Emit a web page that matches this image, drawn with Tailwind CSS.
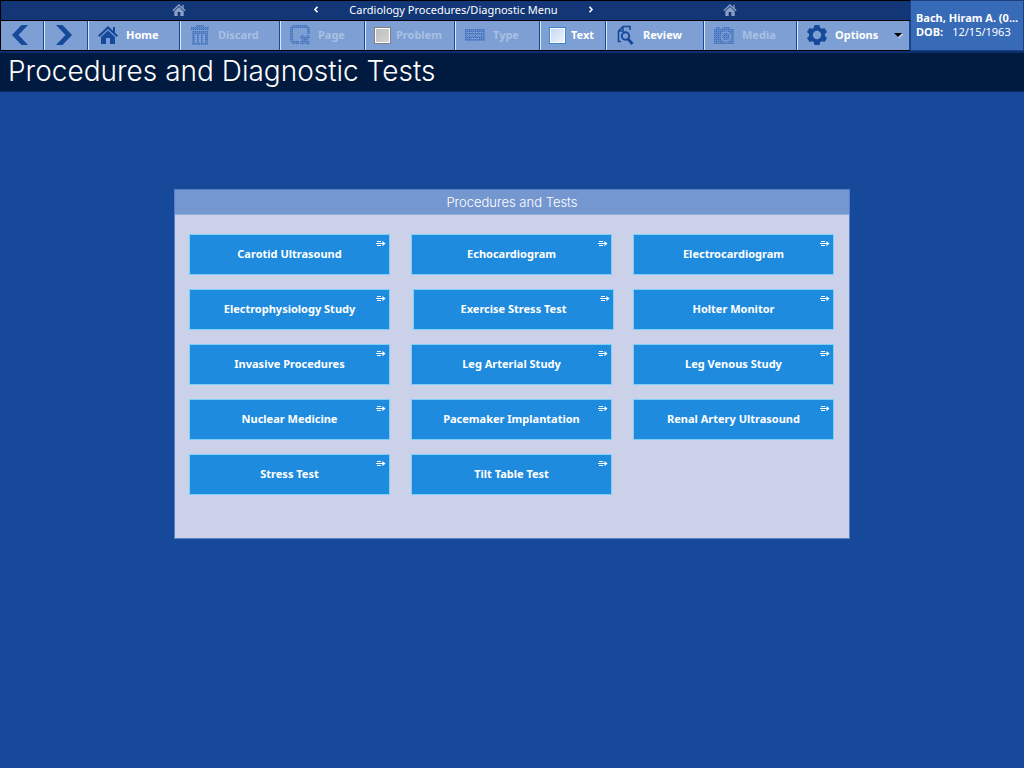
<!DOCTYPE html>
<html lang="en">
<head>
<meta charset="utf-8">
<meta name="viewport" content="width=device-width, initial-scale=1">
<title>Cardiology Procedures/Diagnostic Menu</title>
<script src="https://cdn.jsdelivr.net/npm/@tailwindcss/browser@4"></script>
</head>
<body class="min-h-screen bg-[#17499b] font-['Noto_Sans',sans-serif] text-[11px] leading-[14px] text-white">
<svg class="absolute size-0" aria-hidden="true">
  <defs>
    <pattern id="dither" width="2" height="2" patternUnits="userSpaceOnUse">
      <rect width="2" height="2" fill="#6089ca"/><rect width="1" height="1" fill="#406ebb"/>
    </pattern>
    <symbol id="home" viewBox="0 0 20 18"><path d="M10 0 0 9.500 1.500 11 10 3l8.500 8L20 9.500l-3-3V1h-2v3.700zM10 4.500 3 11v7h5v-6h4v6h5v-7z" fill="currentColor"/></symbol>
    <symbol id="go" viewBox="0 0 10 6"><path d="M1 .5h4M0 2.500h8M1 4.500h4" stroke="#fff" fill="none"/><path d="M6.500 0v5.200L9.500 2.600z" fill="#fff"/></symbol>
  </defs>
</svg>

<header class="flex bg-black">
  <div class="flex min-w-0 flex-1 flex-col gap-px border-y border-l border-black">
    <nav class="grid h-[19px] grid-cols-[300px_1fr_304px] items-center bg-[#123676]" aria-label="Menu path">
      <a href="#" aria-label="Home" class="justify-self-center pb-px pl-14 text-[#8b9fc5]"><svg class="h-3 w-[14px]"><use href="#home"/></svg></a>
      <div class="flex items-center justify-between px-3 pb-[2px]">
        <button type="button" aria-label="Previous menu"><svg class="h-[7px] w-[6px]" viewBox="0 0 6 7"><path d="M4.500.8 2 3.500l2.500 2.700" fill="none" stroke="#fff" stroke-width="1.600"/></svg></button>
        <span>Cardiology Procedures/Diagnostic Menu</span>
        <button type="button" aria-label="Next menu"><svg class="h-[7px] w-[6px]" viewBox="0 0 6 7"><path d="M1.500.8 4 3.500 1.500 6.200" fill="none" stroke="#fff" stroke-width="1.600"/></svg></button>
      </div>
      <a href="#" aria-label="Home" class="justify-self-center pr-14 pb-px text-[#8b9fc5]"><svg class="h-3 w-[14px]"><use href="#home"/></svg></a>
    </nav>
    <div class="flex h-[29px] bg-[#7d9fd3] font-bold" role="toolbar" aria-label="Actions">
      <button type="button" aria-label="Back" class="flex w-[43px] items-center border-r border-[#17499b] pb-px pl-[10px]"><svg class="h-5 w-[18px]" viewBox="0 0 18 20"><path d="M10.500 0H17L7.500 10 17 20h-6.500L1 10z" fill="#17499b"/></svg></button>
      <button type="button" aria-label="Forward" class="flex w-11 items-center border-r border-l border-r-[#17499b] border-l-[#dce6f5] pb-px pl-[10px]"><svg class="h-5 w-[18px]" viewBox="0 0 18 20"><path d="M7.500 0H1l9.500 10L1 20h6.500L17 10z" fill="#17499b"/></svg></button>
      <button type="button" class="flex w-[92px] items-center gap-2 border-r border-l border-r-[#17499b] border-l-[#dce6f5] pb-px pl-[9px]"><svg class="h-[18px] w-5 text-[#17499b]"><use href="#home"/></svg>Home</button>
      <button type="button" disabled class="flex w-[100px] items-center gap-2 border-r border-l border-r-[#17499b] border-l-[#dce6f5] pb-px pl-[10px] text-[#a9c0e4]">
        <svg class="h-5 w-[19px]" viewBox="0 0 19 20" fill="url(#dither)"><path d="M0 2h5V0h8v2h5v3H0z"/><path fill-rule="evenodd" d="M1 6h16v14H1zM4 9v9h2V9zM8 9v9h2V9zM12 9v9h2V9z"/></svg>Discard</button>
      <button type="button" disabled class="flex w-[85px] items-center gap-2 border-r border-l border-r-[#17499b] border-l-[#dce6f5] pb-px pl-[9px] text-[#a9c0e4]">
        <svg class="h-5 w-5" viewBox="0 0 20 20" fill="none" stroke="url(#dither)" stroke-width="3"><path d="M9 17.500H3.500l-2-2v-12l2-2H16l2.500 2V9"/><path d="m11 11 8 8m0-8-8 8" stroke-width="4"/></svg>Page</button>
      <label class="flex w-[90px] items-center gap-[5px] border-r border-l border-r-[#17499b] border-l-[#dce6f5] pb-px pl-[8px] text-[#a9c0e4]">
        <input type="checkbox" disabled class="size-[17px] shrink-0 appearance-none border border-[#808080] bg-linear-to-br from-[#bdbdbd] to-[#d4d4d4] shadow-[inset_0_0_0_1px_#fff]">Problem</label>
      <button type="button" disabled class="flex w-[85px] items-center gap-2 border-r border-l border-r-[#17499b] border-l-[#dce6f5] pb-px pl-[9px] text-[#a9c0e4]">
        <svg class="h-3 w-5" viewBox="0 0 20 12"><path d="M0 0h20v12H0z" fill="url(#dither)"/><path d="M2 3.500h16M2 6.500h16M6 9.500h9" stroke="#82a2d5" stroke-dasharray="2 1"/></svg>Type</button>
      <label class="flex w-[66px] items-center gap-[5px] border-r border-l border-r-[#17499b] border-l-[#dce6f5] pb-px pl-[8px]">
        <input type="checkbox" class="size-[17px] shrink-0 appearance-none border border-[#3d85cf] bg-linear-to-br from-[#c3d7f2] to-[#f0f5fc] shadow-[inset_0_0_0_1px_#fff]">Text</label>
      <button type="button" class="flex w-[98px] items-center gap-2 border-r border-l border-r-[#17499b] border-l-[#dce6f5] pb-px pl-[10px]">
        <svg class="h-5 w-[18px]" viewBox="0 0 18 20" fill="none" stroke="#17499b"><path d="M4 16.500H1.500V6L6 1.500h7V5M6 1.500V6H1.500" stroke-width="1.600"/><circle cx="8.500" cy="11" r="3.700" stroke-width="2"/><path d="m11 14 4.500 5" stroke-width="2.800"/></svg>Review</button>
      <button type="button" disabled class="flex w-[93px] items-center gap-2 border-r border-l border-r-[#17499b] border-l-[#dce6f5] pb-px pl-[9px] text-[#a9c0e4]">
        <svg class="h-[17px] w-5" viewBox="0 0 20 17"><path d="M0 2h2V0h4v2h2l1-2h6l2 2h3v15H0z" fill="url(#dither)"/><circle cx="12" cy="9.500" r="4.500" fill="none" stroke="#7d9fd3" stroke-width="1.500"/></svg>Media</button>
      <button type="button" aria-haspopup="menu" class="flex flex-1 items-center gap-2 border-r border-l border-r-[#17499b] border-l-[#dce6f5] pr-[6px] pb-px pl-[9px]">
        <svg class="size-5" viewBox="0 0 20 20"><path fill="#17499b" fill-rule="evenodd" d="M7.500 0h5l.7 2.800 1.500.9 2.800-.8 2.500 4.200-2.100 2v1.800l2.100 2-2.500 4.200-2.800-.8-1.500.9-.7 2.800h-5l-.7-2.800-1.500-.9-2.800.8L0 12.900l2.100-2V9.100L0 7.100l2.500-4.200 2.800.8 1.500-.9zM10 5.800a4.200 4.200 0 1 0 0 8.400 4.200 4.200 0 0 0 0-8.400z"/></svg>
        Options
        <svg class="ml-auto h-[5px] w-[9px]" viewBox="0 0 9 5"><path d="m4.500 5 4-4" stroke="#fff"/><path d="M0 0h8L4 4z"/></svg></button>
    </div>
  </div>
  <div class="flex w-[114px] flex-col justify-center border border-[#1c407f] bg-[#376ab7] pb-[2px] pl-[5px]">
    <div class="font-bold whitespace-nowrap">Bach, Hiram A. (0...</div>
    <div><span class="mr-[9px] font-bold">DOB:</span>12/15/1963</div>
  </div>
</header>

<div class="border-t-2 border-[#0b2f70]">
  <h1 class="flex h-[39px] items-center border-b border-[#0a2b60] bg-[#001a40] pb-[2px] pl-2 font-['Inter',sans-serif] text-[28px] font-light">Procedures and Diagnostic Tests</h1>
</div>

<main class="px-4 pt-[97px]">
  <section class="mx-auto max-w-[676px] border border-[#5680c4] bg-[#cad1e9]">
    <h2 class="flex h-[25px] items-center justify-center border-b border-[#93aadb] bg-[#7597d0] pb-px font-['Inter',sans-serif] text-[13px] font-light">Procedures and Tests</h2>
    <div class="grid grid-cols-3 gap-x-[21px] gap-y-[14px] pt-[19px] pr-[15px] pb-[43px] pl-[14px] font-bold">
      <button type="button" class="relative h-[41px] border border-[#7fd0f8] bg-[#1f8bde] pb-[2px]">Carotid Ultrasound<svg class="absolute top-[6px] right-[3px] h-[6px] w-[10px]"><use href="#go"/></svg></button>
      <button type="button" class="relative h-[41px] border border-[#7fd0f8] bg-[#1f8bde] pb-[2px]">Echocardiogram<svg class="absolute top-[6px] right-[3px] h-[6px] w-[10px]"><use href="#go"/></svg></button>
      <button type="button" class="relative h-[41px] border border-[#7fd0f8] bg-[#1f8bde] pb-[2px]">Electrocardiogram<svg class="absolute top-[6px] right-[3px] h-[6px] w-[10px]"><use href="#go"/></svg></button>
      <button type="button" class="relative h-[41px] border border-[#7fd0f8] bg-[#1f8bde] pb-[2px]">Electrophysiology Study<svg class="absolute top-[6px] right-[3px] h-[6px] w-[10px]"><use href="#go"/></svg></button>
      <button type="button" class="relative -mr-[2px] ml-[2px] h-[41px] border border-[#7fd0f8] bg-[#1f8bde] pb-[2px]">Exercise Stress Test<svg class="absolute top-[6px] right-[3px] h-[6px] w-[10px]"><use href="#go"/></svg></button>
      <button type="button" class="relative h-[41px] border border-[#7fd0f8] bg-[#1f8bde] pb-[2px]">Holter Monitor<svg class="absolute top-[6px] right-[3px] h-[6px] w-[10px]"><use href="#go"/></svg></button>
      <button type="button" class="relative h-[41px] border border-[#7fd0f8] bg-[#1f8bde] pb-[2px]">Invasive Procedures<svg class="absolute top-[6px] right-[3px] h-[6px] w-[10px]"><use href="#go"/></svg></button>
      <button type="button" class="relative h-[41px] border border-[#7fd0f8] bg-[#1f8bde] pb-[2px]">Leg Arterial Study<svg class="absolute top-[6px] right-[3px] h-[6px] w-[10px]"><use href="#go"/></svg></button>
      <button type="button" class="relative h-[41px] border border-[#7fd0f8] bg-[#1f8bde] pb-[2px]">Leg Venous Study<svg class="absolute top-[6px] right-[3px] h-[6px] w-[10px]"><use href="#go"/></svg></button>
      <button type="button" class="relative h-[41px] border border-[#7fd0f8] bg-[#1f8bde] pb-[2px]">Nuclear Medicine<svg class="absolute top-[6px] right-[3px] h-[6px] w-[10px]"><use href="#go"/></svg></button>
      <button type="button" class="relative h-[41px] border border-[#7fd0f8] bg-[#1f8bde] pb-[2px]">Pacemaker Implantation<svg class="absolute top-[6px] right-[3px] h-[6px] w-[10px]"><use href="#go"/></svg></button>
      <button type="button" class="relative h-[41px] border border-[#7fd0f8] bg-[#1f8bde] pb-[2px]">Renal Artery Ultrasound<svg class="absolute top-[6px] right-[3px] h-[6px] w-[10px]"><use href="#go"/></svg></button>
      <button type="button" class="relative h-[41px] border border-[#7fd0f8] bg-[#1f8bde] pb-[2px]">Stress Test<svg class="absolute top-[6px] right-[3px] h-[6px] w-[10px]"><use href="#go"/></svg></button>
      <button type="button" class="relative h-[41px] border border-[#7fd0f8] bg-[#1f8bde] pb-[2px]">Tilt Table Test<svg class="absolute top-[6px] right-[3px] h-[6px] w-[10px]"><use href="#go"/></svg></button>
    </div>
  </section>
</main>
</body>
</html>
